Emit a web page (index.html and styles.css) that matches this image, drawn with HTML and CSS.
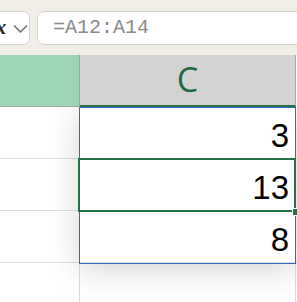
FILE: index.html
```html
<!DOCTYPE html>
<html>
<head>
<meta charset="utf-8">
<link rel="stylesheet" href="styles.css">
</head>
<body>
<div class="app">
  <div class="toolbar">
    <div class="fxbox">
      <span class="fx">fx</span>
      <svg class="chev" width="15" height="10" viewBox="0 0 15 10"><polyline points="1,1.5 7.5,8 14,1.5" fill="none" stroke="#707070" stroke-width="1.5"/></svg>
    </div>
    <div class="formula">=A12:A14</div>
  </div>
  <div class="sheet">
    <div class="row head">
      <div class="cell b hb"></div>
      <div class="cell c hc">C</div>
      <div class="cell rest"></div>
    </div>
    <div class="row">
      <div class="cell b"></div>
      <div class="cell c num">3</div>
      <div class="cell rest"></div>
    </div>
    <div class="row">
      <div class="cell b"></div>
      <div class="cell c num">13</div>
      <div class="cell rest"></div>
    </div>
    <div class="row">
      <div class="cell b"></div>
      <div class="cell c num">8</div>
      <div class="cell rest"></div>
    </div>
    <div class="row last">
      <div class="cell b"></div>
      <div class="cell c"></div>
      <div class="cell rest"></div>
    </div>
    <div class="range"></div>
    <div class="active"></div>
    <div class="handle"></div>
  </div>
</div>
</body>
</html>
```
FILE: styles.css
```css
html, body {
  margin: 0;
  padding: 0;
  background: #ffffff;
  overflow: hidden;
}
.app {
  width: 297px;
  height: 302px;
  overflow: hidden;
  font-family: "Liberation Sans", Arial, sans-serif;
}
.toolbar {
  height: 55px;
  box-sizing: border-box;
  padding-top: 11px;
  background: #f1eee7;
  display: flex;
  align-items: flex-start;
  gap: 7px;
}
.fxbox {
  width: 52px;
  height: 34px;
  margin-left: -22px;
  box-sizing: border-box;
  background: #fff;
  border: 1px solid #d9d6cf;
  border-radius: 7px;
  display: flex;
  align-items: center;
  padding-left: 9px;
  gap: 7px;
  flex: none;
}
.fx {
  font-family: "Liberation Serif", serif;
  font-style: italic;
  font-weight: bold;
  font-size: 22px;
  color: #2b2b2b;
  line-height: 1;
  margin-top: -3px;
}
.chev { flex: none; margin-top: 2px; }
.formula {
  flex: 1;
  height: 34px;
  margin-right: -20px;
  box-sizing: border-box;
  background: #fff;
  border: 1px solid #d4d1ca;
  border-radius: 7px;
  padding-left: 15px;
  font-family: "Liberation Mono", monospace;
  font-size: 20px;
  line-height: 32px;
  color: #8a8a8a;
}
.sheet {
  position: relative;
}
.row {
  display: flex;
  height: 52px;
}
.row.last { height: 40px; }
.cell {
  box-sizing: border-box;
  height: 100%;
  border-bottom: 1px solid #dcdcdc;
  background: #fff;
}
.b {
  width: 80px;
  border-right: 1px solid #dcdcdc;
}
.c {
  width: 216px;
  border-right: 1px solid #dcdcdc;
}
.rest { flex: 1; }
.head .cell { position: relative; z-index: 3; }
.hb {
  background: #9fd5b7;
  border-bottom: 1px solid #9aa39d;
  border-right: 1px solid #9aa39d;
}
.hc {
  background: #d3d3d3;
  border-bottom: 2px solid #217346;
  border-right: 1px solid #a8a8a8;
  display: flex;
  align-items: center;
  justify-content: center;
  font-family: "Open Sans", sans-serif;
  font-size: 34px;
  color: #1e6b3f;
  padding-bottom: 2px;
}
.head .rest { background: #fff; border-bottom: none; }
.num {
  display: flex;
  align-items: flex-end;
  justify-content: flex-end;
  padding: 0 6px 4px 0;
  font-size: 33px;
  line-height: 36px;
  color: #000;
}
.last .cell { border-bottom: none; }
.range {
  position: absolute;
  left: 79px;
  top: 52px;
  width: 217px;
  height: 157px;
  box-sizing: border-box;
  border: 1px solid #3a66c0;
  box-shadow: 0 6px 30px rgba(0,0,0,0.17);
  z-index: 1;
}
.active {
  position: absolute;
  left: 78px;
  top: 103px;
  width: 218px;
  height: 54px;
  box-sizing: border-box;
  border: 2px solid #217346;
  z-index: 2;
}
.handle {
  position: absolute;
  left: 292px;
  top: 153px;
  width: 6px;
  height: 6px;
  background: #217346;
  border: 1px solid #fff;
  z-index: 4;
}
```
